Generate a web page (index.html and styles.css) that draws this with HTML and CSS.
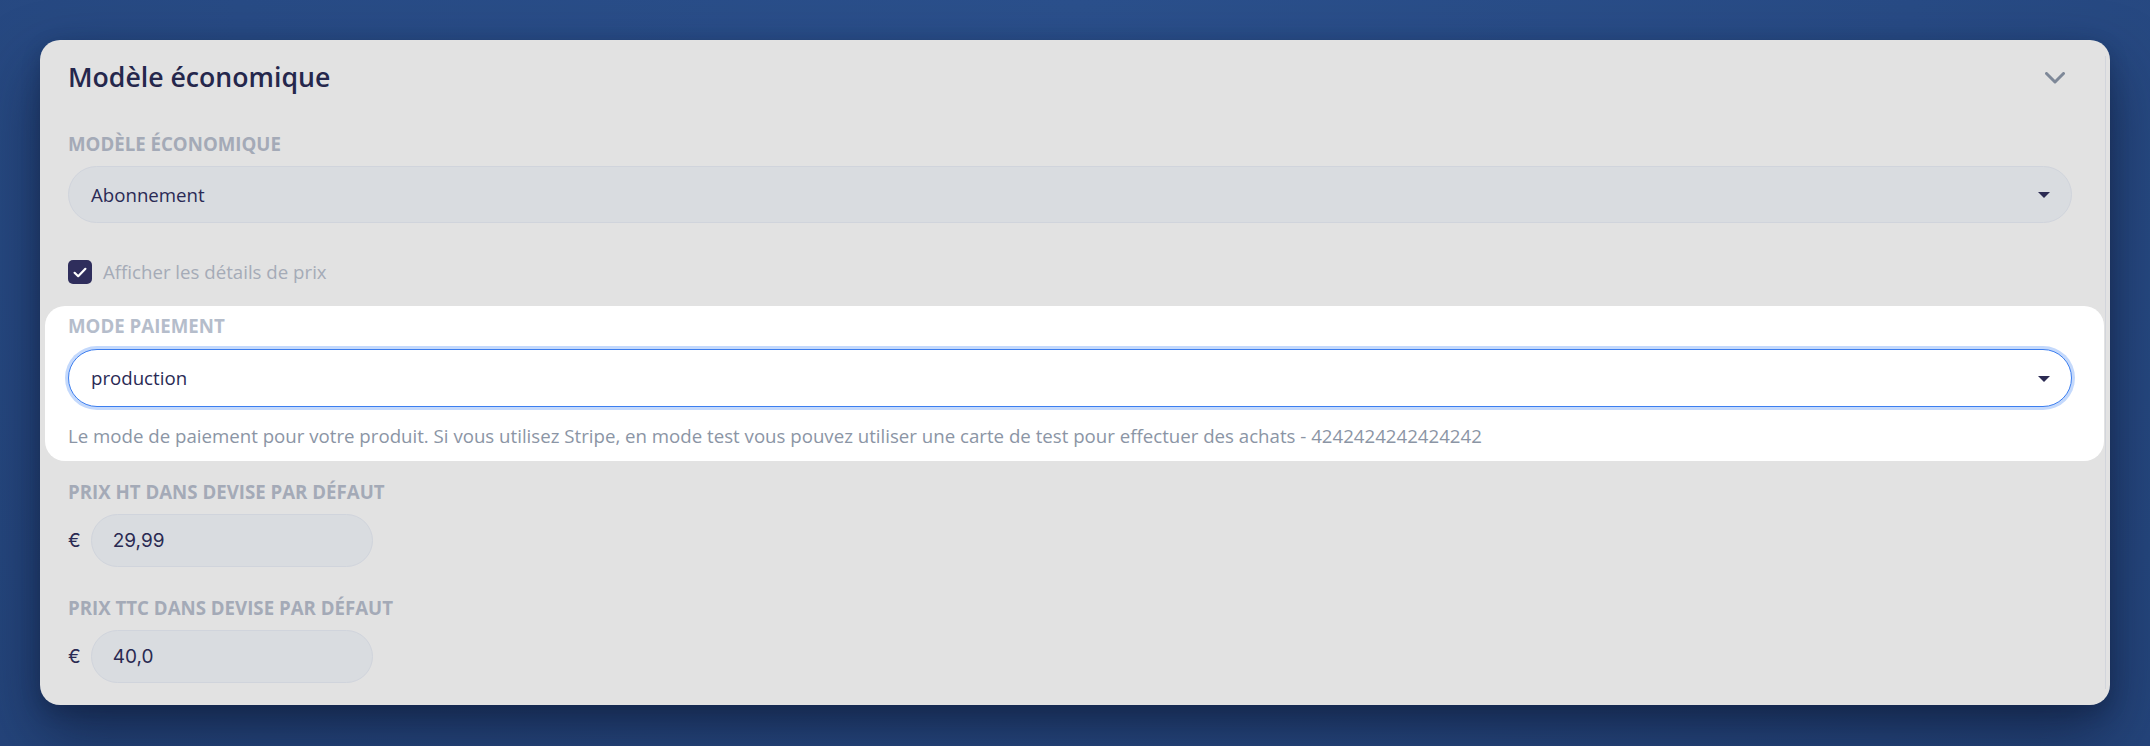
FILE: index.html
```html
<!DOCTYPE html>
<html lang="fr">
<head>
<meta charset="utf-8">
<title>Modèle économique</title>
<link rel="stylesheet" href="styles.css">
</head>
<body>
<section class="card">
  <header class="card-header">
    <h2 class="card-title">Modèle économique</h2>
    <svg class="chevron" width="20" height="12" viewBox="0 0 20 12" aria-hidden="true">
      <path d="M1.5 1.5 L10 10 L18.5 1.5" fill="none" stroke="#7e8898" stroke-width="3" stroke-linecap="round" stroke-linejoin="round"/>
    </svg>
  </header>

  <div class="field">
    <div class="label">Modèle économique</div>
    <div class="select">
      <span class="select-value">Abonnement</span>
      <span class="caret"></span>
    </div>
  </div>

  <label class="check-row">
    <span class="checkbox">
      <svg width="14" height="11" viewBox="0 0 14 11" aria-hidden="true">
        <path d="M1.6 5.8 L5.2 9.2 L12.4 1.8" fill="none" stroke="#ffffff" stroke-width="2.2" stroke-linecap="round" stroke-linejoin="round"/>
      </svg>
    </span>
    <span class="check-text">Afficher les détails de prix</span>
  </label>

  <div class="spotlight">
    <div class="label label-light">Mode paiement</div>
    <div class="select select-focus">
      <span class="select-value">production</span>
      <span class="caret"></span>
    </div>
    <p class="help">Le mode de paiement pour votre produit. Si vous utilisez Stripe, en mode test vous pouvez utiliser une carte de test pour effectuer des achats - 4242424242424242</p>
  </div>

  <div class="field field-price">
    <div class="label">Prix HT dans devise par défaut</div>
    <div class="price-row">
      <span class="currency">€</span>
      <div class="price-input">29,99</div>
    </div>
  </div>

  <div class="field field-price2">
    <div class="label">Prix TTC dans devise par défaut</div>
    <div class="price-row">
      <span class="currency">€</span>
      <div class="price-input">40,0</div>
    </div>
  </div>
</section>
</body>
</html>
```

FILE: styles.css
```css
* { box-sizing: border-box; }

html, body {
  margin: 0;
  height: 100%;
}

body {
  background: radial-gradient(ellipse at 50% 0%, #2b508c 0%, #284b85 55%, #24447a 100%);
  padding: 40px 40px 0 40px;
  font-family: "Open Sans", "Liberation Sans", sans-serif;
  color: #2a2a54;
}

.card {
  position: relative;
  background: #e2e2e2;
  border-radius: 20px;
  padding: 18px 38px 22px 28px;
  box-shadow: 0 28px 60px rgba(12, 22, 48, 0.6), 0 6px 18px rgba(12, 22, 48, 0.25);
}

.card::after {
  content: "";
  position: absolute;
  right: 4px;
  top: 16px;
  bottom: 16px;
  width: 1px;
  background: #d2d5dc;
}

.card-header {
  display: flex;
  align-items: center;
  justify-content: space-between;
  height: 38px;
}

.card-title {
  margin: 0;
  font-size: 26.67px;
  font-weight: 600;
  line-height: 38px;
  color: #25274c;
}

.chevron {
  margin-right: 7px;
  margin-top: 2px;
  display: block;
}

.field {
  margin-top: 34px;
}

.label {
  font-size: 18.67px;
  line-height: 28px;
  height: 28px;
  font-weight: 700;
  text-transform: uppercase;
  color: #a4aab7;
}

.label-light {
  color: #b5bdcb;
}

.select {
  margin-top: 8px;
  height: 57px;
  border-radius: 29px;
  background: #d9dce0;
  border: 1px solid #d0d4dc;
  display: flex;
  align-items: center;
  justify-content: space-between;
  padding: 0 21px 0 22px;
}

.select-value {
  font-size: 18.67px;
  line-height: 28px;
  color: #2a2a55;
}

.caret {
  width: 0;
  height: 0;
  border-left: 6px solid transparent;
  border-right: 6px solid transparent;
  border-top: 6px solid #2b2a52;
  margin-top: 1px;
}

.check-row {
  margin-top: 35px;
  height: 28px;
  display: flex;
  align-items: center;
  gap: 11px;
}

.checkbox {
  width: 24px;
  height: 24px;
  border-radius: 5px;
  background: #2f2e5c;
  display: flex;
  align-items: center;
  justify-content: center;
}

.checkbox svg { display: block; }

.check-text {
  font-size: 18.67px;
  line-height: 28px;
  color: #a5abb7;
}

.spotlight {
  margin: 20px -32px 0 -23px;
  padding: 6px 32px 11px 23px;
  background: #ffffff;
  border-radius: 20px;
}

.select-focus {
  margin-top: 9px;
  height: 58px;
  background: #ffffff;
  border: 1.5px solid #3c7eef;
  box-shadow: 0 0 0 3px #c4d9fc;
}

.help {
  margin: 15px 0 0 0;
  font-size: 18.67px;
  line-height: 28px;
  color: #8b95a5;
}

.field-price {
  margin-top: 17px;
}

.field-price2 {
  margin-top: 27px;
}

.price-row {
  margin-top: 8px;
  display: flex;
  align-items: center;
  gap: 10px;
}

.currency {
  font-family: "Inter", "Liberation Sans", sans-serif;
  font-size: 19px;
  color: #2a2a52;
}

.price-input {
  width: 282px;
  height: 53px;
  border-radius: 27px;
  background: #d9dce0;
  border: 1px solid #d0d4dc;
  padding: 0 20px 0 21px;
  display: flex;
  align-items: center;
  font-family: "Inter", "Liberation Sans", sans-serif;
  font-size: 19px;
  color: #2a2a52;
}
```
